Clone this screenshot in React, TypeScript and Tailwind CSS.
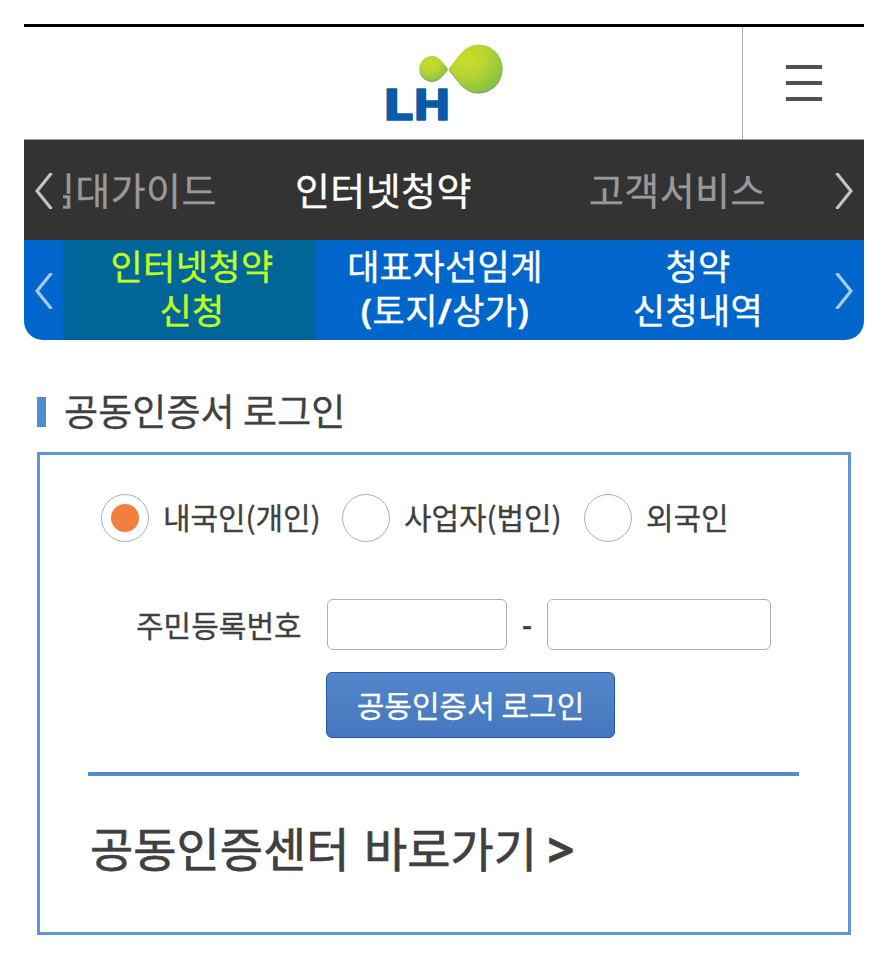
import type { ReactNode } from "react";

const TABS = [
  { lines: ["인터넷청약", "신청"], active: true },
  { lines: ["대표자선임계", "(토지/상가)"], active: false },
  { lines: ["청약", "신청내역"], active: false },
];

const USER_TYPES = [
  { label: "내국인(개인)", width: "w-[241px]", checked: true },
  { label: "사업자(법인)", width: "w-[242px]", checked: false },
  { label: "외국인", width: "w-[150px]", checked: false },
];

function Logo() {
  return (
    <svg width="124" height="94" viewBox="0 0 124 94" className="block" aria-label="LH">
      <defs>
        <radialGradient id="leaf" cx="0.35" cy="0.3" r="0.75">
          <stop offset="0" stopColor="#cddc2a" />
          <stop offset="0.45" stopColor="#b9d532" />
          <stop offset="1" stopColor="#84c241" />
        </radialGradient>
      </defs>
      <g fill="#8b8f86" transform="translate(0 1)">
        <path d="M67 29C62 34.500 58 41 51 41A12.500 12.500 0 0 1 51 16C58 16 62 22.500 67 29Z" />
        <path d="M67.500 29C76 19 83 4.500 97.500 4.500A24 24 0 0 1 97.500 52.500C83 52.500 76 39 67.500 29Z" />
      </g>
      <path
        d="M67 29C62 34.500 58 41 51 41A12.500 12.500 0 0 1 51 16C58 16 62 22.500 67 29Z"
        fill="url(#leaf)"
      />
      <path
        d="M67.500 29C76 19 83 4.500 97.500 4.500A24 24 0 0 1 97.500 52.500C83 52.500 76 39 67.500 29Z"
        fill="url(#leaf)"
      />
      <g
        className="font-['Inter',sans-serif] font-extrabold"
        fontSize="42"
        fill="#0a5ca8"
        stroke="#0a5ca8"
        strokeWidth="1.500"
        strokeLinejoin="round"
      >
        <text x="3.500" y="79.500" textLength="29" lengthAdjust="spacingAndGlyphs">L</text>
        <text x="33.500" y="79.500" textLength="35" lengthAdjust="spacingAndGlyphs">H</text>
      </g>
    </svg>
  );
}

function Arrow({ flip, color }: { flip?: boolean; color: string }) {
  return (
    <button
      type="button"
      className={`flex h-full w-[39px] shrink-0 items-center justify-center pt-px ${flip ? "pr-0.5" : "pl-px"}`}
    >
      <svg width="18" height="36" viewBox="0 0 18 36" className={flip ? "-scale-x-100" : ""}>
        <path d="M16.500 0L2 18L16.500 36" fill="none" stroke={color} strokeWidth="3.200" />
      </svg>
    </button>
  );
}

// brackets and slashes are set heavier than the hangul around them
function TabLine({ text }: { text: string }) {
  return (
    <span className="block h-11">
      {text.split(/([()/])/).map((part, i) =>
        /^[()/]$/.test(part) ? (
          <b key={i} className="font-['Noto_Sans',sans-serif] font-semibold">
            {part}
          </b>
        ) : (
          part
        ),
      )}
    </span>
  );
}

function Field({ className }: { className: string }) {
  return (
    <input
      type="text"
      className={`h-[51px] rounded-md border-[1.500px] border-[#b0b0b0] bg-white px-3 text-2xl outline-none ${className}`}
    />
  );
}

function Heading({ children }: { children: ReactNode }) {
  return (
    <h1 className="flex h-[52px] items-center gap-[18px] pl-[13px] text-[37px] leading-[50px] tracking-[0.1px]">
      <span className="h-[30px] w-[9px] bg-[#4f8cd2]" />
      <span className="-mt-[5px]">{children}</span>
    </h1>
  );
}

export default function App() {
  return (
    <div className="min-h-[978px] w-[888px] bg-white p-6 font-['Noto_Sans_CJK_KR',sans-serif] text-[#404040] [-webkit-text-stroke:0.300px]">
      <header className="flex h-[116px] border-t-[3px] border-b border-t-black border-b-[#999]">
        <div className="w-[119px]" />
        <div className="flex flex-1 justify-center pt-[13px]">
          <Logo />
        </div>
        <button
          type="button"
          className="flex w-[122px] flex-col items-center justify-center gap-3 border-l border-[#b0b0b0]"
        >
          <span className="h-1 w-9 bg-[#505050]" />
          <span className="h-1 w-9 bg-[#505050]" />
          <span className="h-1 w-9 bg-[#505050]" />
        </button>
      </header>

      <nav className="flex h-[100px] bg-[#333]">
        <Arrow color="#c4c4c4" />
        <div className="flex flex-1 items-center overflow-hidden pb-[4px] text-[38px] tracking-[0.4px] whitespace-nowrap text-[#999]">
          <a className="-ml-[23px] w-[255px] shrink-0">임대가이드</a>
          <a className="w-[294px] shrink-0 text-white">인터넷청약</a>
          <a className="shrink-0">고객서비스</a>
        </div>
        <Arrow flip color="#c4c4c4" />
      </nav>

      <nav className="flex h-[100px] overflow-hidden rounded-b-[19px] bg-[#0066cc]">
        <Arrow color="#a9cbef" />
        <div className="flex flex-1">
          {TABS.map((tab) => (
            <a
              key={tab.lines[0]}
              className={`flex w-[253px] flex-col items-center pt-[3px] pl-[5px] text-[35px] leading-[44px] tracking-[0.400px] [-webkit-text-stroke:0.400px] ${
                tab.active ? "bg-[#006699] text-[#bfff1a]" : "text-white"
              }`}
            >
              {tab.lines.map((line) => (
                <TabLine key={line} text={line} />
              ))}
            </a>
          ))}
        </div>
        <Arrow flip color="#a9cbef" />
      </nav>

      <main className="pt-[46px]">
        <Heading>공동인증서 로그인</Heading>

        <section className="mx-[13px] mt-[14px] h-[483px] border-[3px] border-[#5d95d7] pt-[38px]">
          <div className="flex h-[49px] pl-[61px] text-[30px]">
            {USER_TYPES.map((type) => (
              <label key={type.label} className={`flex items-center gap-[14px] whitespace-nowrap ${type.width}`}>
                <span className="flex size-12 shrink-0 items-center justify-center rounded-full border-[1.500px] border-[#b0b0b0]">
                  {type.checked && <span className="size-7 rounded-full bg-[#f37f3f]" />}
                </span>
                <span className="pb-[3px] tracking-[-0.1px]">{type.label}</span>
              </label>
            ))}
          </div>

          <div className="mt-[57px] flex items-center pl-[96px] text-[30px] leading-[51px]">
            <span className="w-[191px]">주민등록번호</span>
            <Field className="w-[180px]" />
            <span className="w-10 text-center font-['Noto_Sans',sans-serif] font-medium">-</span>
            <Field className="w-[224px]" />
          </div>

          <button
            type="button"
            className="mt-[22px] ml-[286px] flex h-[66px] w-[289px] items-center justify-center rounded-md border border-[#2458a8] bg-linear-to-b from-[#5586cc] to-[#4477bd] pb-0.5 text-[30px] text-white"
          >
            공동인증서 로그인
          </button>

          <div className="mt-[34px] ml-[48px] h-1 w-[711px] bg-[#4f8cd2]" />

          <a className="mt-[36px] block pl-[50px] text-[47px] leading-[70px] [-webkit-text-stroke:0.700px] [word-spacing:4px]">
            공동인증센터 바로가기 <b className="-ml-1 font-['Noto_Sans',sans-serif]">&gt;</b>
          </a>
        </section>
      </main>
    </div>
  );
}
